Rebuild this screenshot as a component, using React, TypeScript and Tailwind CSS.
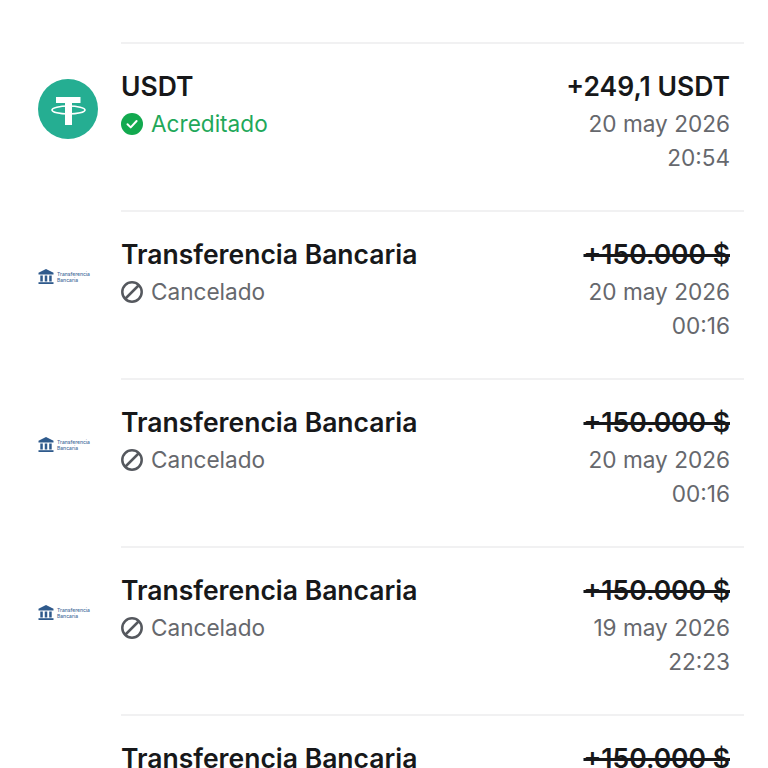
const rows = [
  { amount: "+150.000 $", date: "20 may 2026", time: "00:16" },
  { amount: "+150.000 $", date: "20 may 2026", time: "00:16" },
  { amount: "+150.000 $", date: "19 may 2026", time: "22:23" },
  { amount: "+150.000 $", date: "", time: "" },
];

function TetherLogo() {
  return (
    <svg width="60" height="60" viewBox="0 0 60 60">
      <circle cx="30" cy="30" r="30" fill="#25ae92" />
      <ellipse cx="30.5" cy="31" rx="16.5" ry="4" fill="none" stroke="#fff" strokeWidth="1.6" />
      <path d="M18 18h24.500v6H34v22h-7V24h-9z" fill="#fff" />
    </svg>
  );
}

function BankLogo() {
  return (
    <div className="flex items-center gap-[3px] w-[54px]">
      <svg width="16" height="17" viewBox="0 0 16 17" fill="#2f5a8c" className="shrink-0">
        <path d="M8 1 15.500 4.800V6.500H.5V4.800z" />
        <path d="M2.300 7.500h2.500v6H2.300zM6.750 7.500h2.500v6h-2.500zM11.200 7.500h2.500v6h-2.500z" />
        <path d="M.5 14.200h15V16H.5z" />
      </svg>
      <div className="text-[5px] leading-[6px] font-medium text-[#3f6a98] whitespace-nowrap">
        <div>Transferencia</div>
        <div>Bancaria</div>
      </div>
    </div>
  );
}

function CheckIcon() {
  return (
    <svg width="22" height="22" viewBox="0 0 22 22">
      <circle cx="11" cy="11" r="11" fill="#12a94f" />
      <path d="M6.500 11.300 9.700 14.400 15.600 8" fill="none" stroke="#fff" strokeWidth="2" strokeLinecap="round" strokeLinejoin="round" />
    </svg>
  );
}

function CancelIcon() {
  return (
    <svg width="22" height="22" viewBox="0 0 22 22" fill="none" stroke="#55585e" strokeWidth="2.500">
      <circle cx="11" cy="11" r="9.700" />
      <path d="M4 18 18 4" />
    </svg>
  );
}

function Row({ logo, title, icon, status, statusColor, amount, struck, date, time }: {
  logo: React.ReactNode;
  title: string;
  icon: React.ReactNode;
  status: string;
  statusColor: string;
  amount: string;
  struck?: boolean;
  date: string;
  time: string;
}) {
  return (
    <div className="flex h-[168px]">
      <div className="w-[121px] pl-[38px] shrink-0 pt-[37px]">{logo}</div>
      <div className="flex-1 mr-[24px] border-t-2 border-[#f1f1f2] pr-[14px] pt-[25px] flex justify-between">
        <div>
          <div className="text-[26.500px] leading-[34px] font-semibold text-[#17181a]">{title}</div>
          <div className={`flex items-center gap-[8px] mt-[4px] text-[22.600px] leading-[34px] ${statusColor}`}>
            {icon}
            {status}
          </div>
        </div>
        <div className="text-right text-[22.600px] leading-[34px] text-[#66686d]">
          <div className={`text-[26.500px] font-semibold text-[#17181a] ${struck ? "line-through decoration-[2.500px]" : ""}`}>{amount}</div>
          <div className="mt-[4px]">{date}</div>
          <div>{time}</div>
        </div>
      </div>
    </div>
  );
}

export default function App() {
  return (
    <div className="h-[768px] overflow-hidden bg-white pt-[42px] font-['Inter',sans-serif]">
      <Row
        logo={<TetherLogo />}
        title="USDT"
        icon={<CheckIcon />}
        status="Acreditado"
        statusColor="text-[#1fa85a]"
        amount="+249,1 USDT"
        date="20 may 2026"
        time="20:54"
      />
      {rows.map((r, i) => (
        <Row
          key={i}
          logo={<div className="pt-[21px]"><BankLogo /></div>}
          title="Transferencia Bancaria"
          icon={<CancelIcon />}
          status="Cancelado"
          statusColor="text-[#66686d]"
          amount={r.amount}
          struck
          date={r.date}
          time={r.time}
        />
      ))}
    </div>
  );
}
